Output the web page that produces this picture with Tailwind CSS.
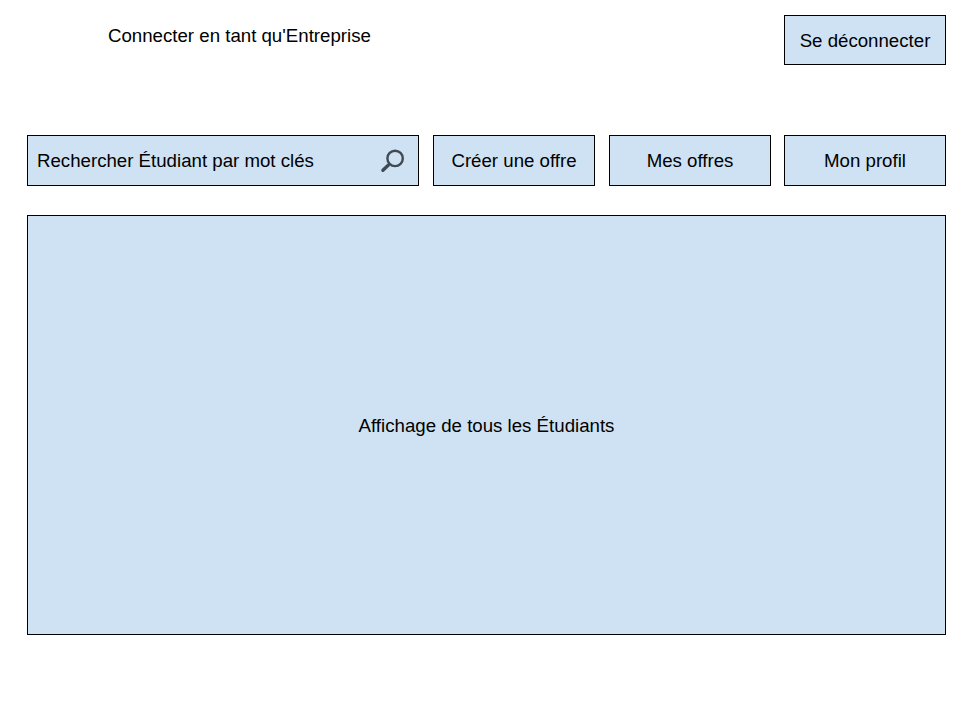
<!DOCTYPE html>
<html lang="fr"><head><meta charset="utf-8"><title>Espace Entreprise</title>
<script src="https://cdn.jsdelivr.net/npm/@tailwindcss/browser@4"></script></head>
<body class="bg-white text-black font-['Liberation_Sans',Arial,sans-serif] text-[18.67px] leading-[22px]">
<main class="w-[960px] h-[720px] pt-[15px] pl-[27px] pr-[14px] overflow-hidden">
<header class="flex justify-between h-[50px]">
<p class="pl-[81px] pt-[10px] whitespace-nowrap">Connecter en tant qu'Entreprise</p>
<button class="w-[162px] h-[50px] pt-[2px] border border-black bg-[#cfe2f3] whitespace-nowrap">Se déconnecter</button>
</header>
<nav class="mt-[70px] h-[51px] grid grid-cols-[392px_162px_162px_161px] gap-x-[14px]">
<div class="flex items-center justify-between border border-black bg-[#cfe2f3] pl-[9px] pr-[14px] whitespace-nowrap"><span>Rechercher Étudiant par mot clés</span>
<svg class="w-6 h-6" viewBox="0 0 24 24" fill="none" stroke="#3f4a55"><circle cx="15.1" cy="9.4" r="7.7" stroke-width="2.4"/><path d="M9.4 15L8 16.4" stroke-width="2.4"/><path d="M8.2 16.3L2.9 21.3" stroke-width="3.4" stroke-linecap="round"/></svg></div>
<button class="border border-black bg-[#cfe2f3]">Créer une offre</button>
<button class="border border-black bg-[#cfe2f3]">Mes offres</button>
<button class="-ml-px border border-black bg-[#cfe2f3]">Mon profil</button>
</nav>
<section class="mt-[29px] h-[420px] pt-[2px] border border-black bg-[#cfe2f3] flex items-center justify-center"><p>Affichage de tous les Étudiants</p></section>
</main></body></html>
